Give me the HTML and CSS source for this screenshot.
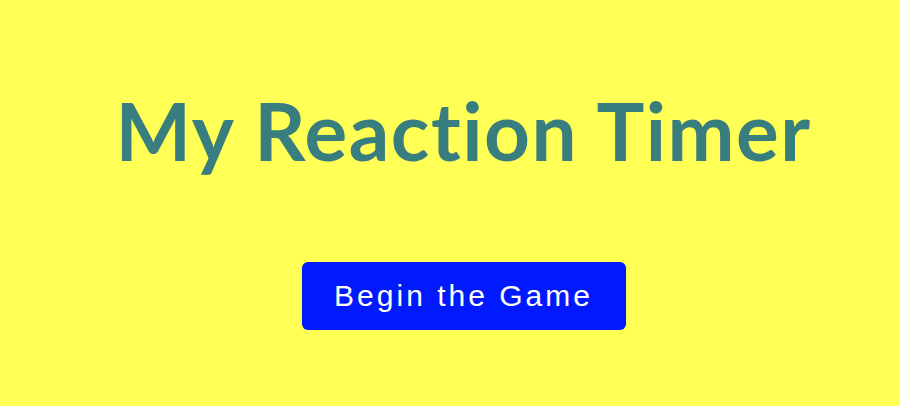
FILE: index.html
```html
<!DOCTYPE html>
<html>
<head>
<meta charset="utf-8">
<link rel="stylesheet" href="styles.css">
</head>
<body>
<main class="app">
  <h1 class="title">My Reaction Timer</h1>
  <button class="start">Begin the Game</button>
</main>
</body>
</html>
```
FILE: styles.css
```css
html, body {
  margin: 0;
  height: 100%;
  background: #ffff55;
}
.app {
  display: flex;
  flex-direction: column;
  align-items: center;
  padding-left: 27px;
  padding-top: 82px;
}
.title {
  margin: 0;
  font-family: Lato, "Open Sans", sans-serif;
  font-weight: 700;
  font-size: 80px;
  line-height: 96px;
  letter-spacing: 1.5px;
  font-variant-ligatures: none;
  color: #387e7e;
}
.start {
  margin-top: 84px;
  width: 324px;
  height: 68px;
  border: none;
  border-radius: 6px;
  background: #0019fd;
  color: #fff;
  font-family: "Liberation Sans", Arial, sans-serif;
  font-size: 30px;
  letter-spacing: 3px;
  padding: 0;
}
```
